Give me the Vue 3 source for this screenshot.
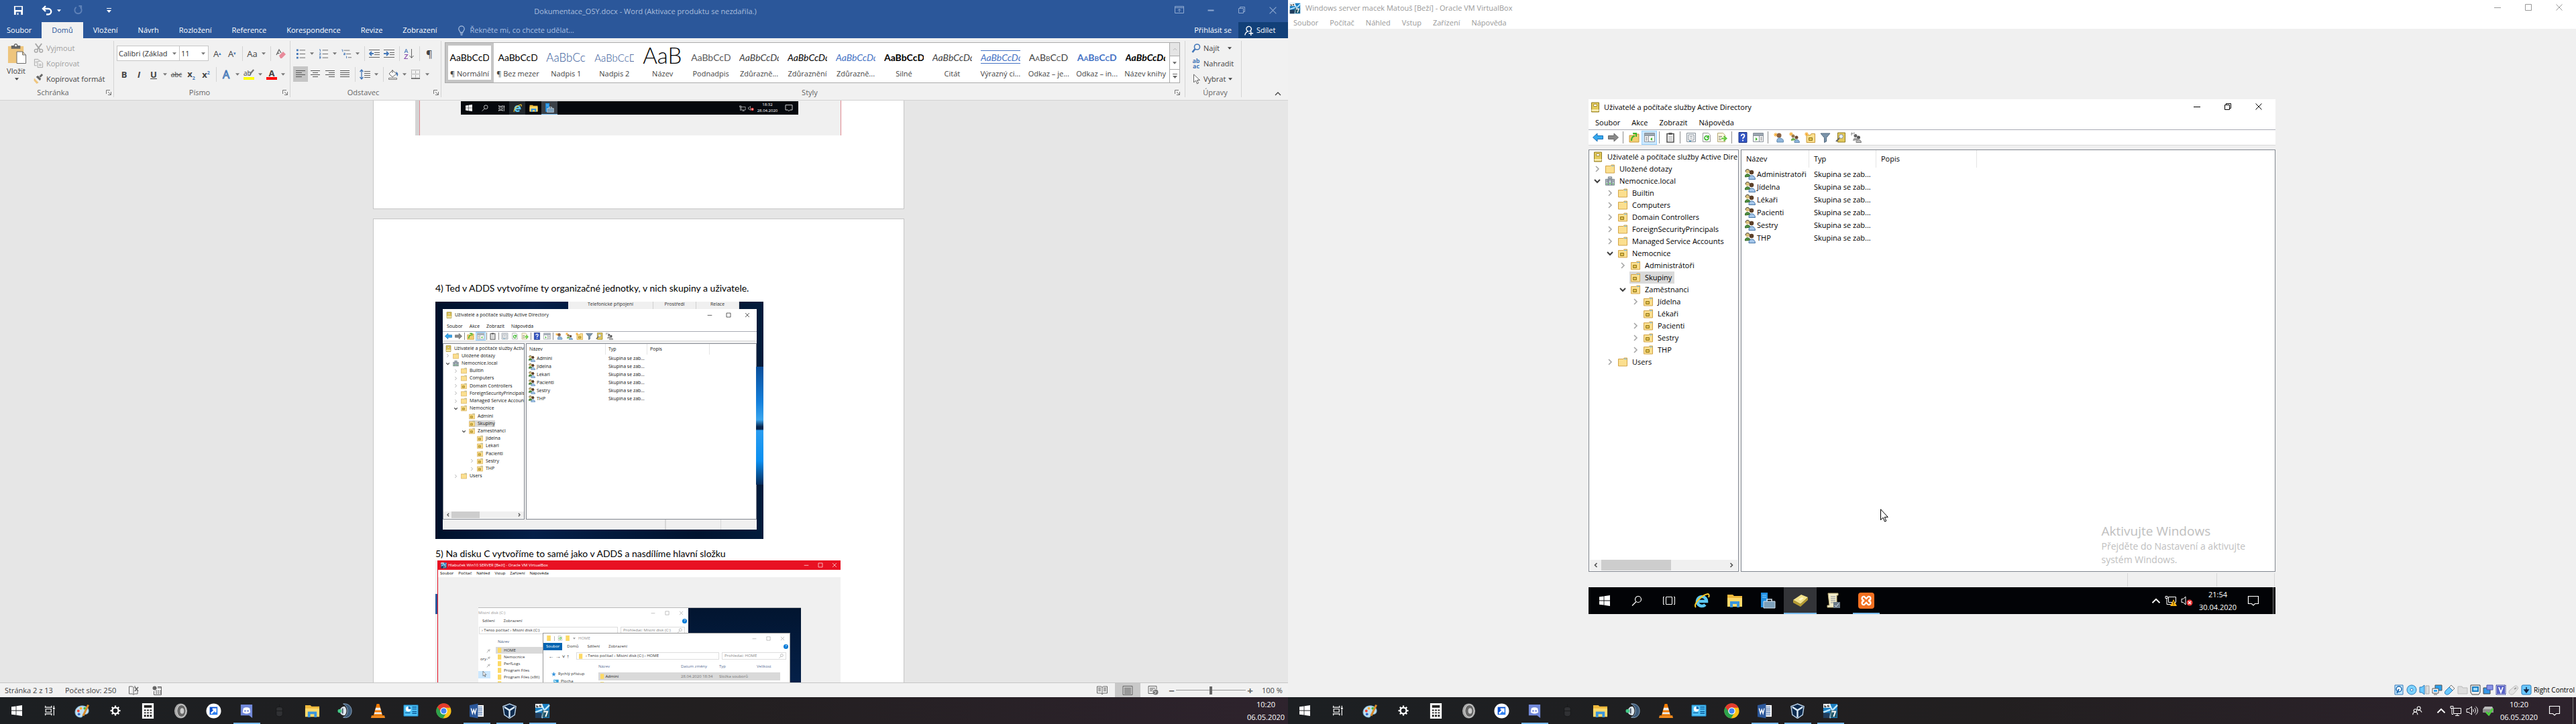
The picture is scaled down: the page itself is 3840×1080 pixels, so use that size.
<script setup>
import { h } from 'vue'

const Ic = (p) =>
  h('svg', { class: 'ic', width: p.s || 16, height: p.t || p.s || 16, 'aria-hidden': 'true' }, [
    h('use', { href: '#' + p.n, width: '100%', height: '100%' }),
  ])
Ic.props = ['n', 's', 't']

const tabs = ['Domů', 'Vložení', 'Návrh', 'Rozložení', 'Reference', 'Korespondence', 'Revize', 'Zobrazení']
const styles = [
  ['¶ Normální', ''], ['¶ Bez mezer', ''], ['Nadpis 1', 'h1'], ['Nadpis 2', 'h2'], ['Název', 'title'],
  ['Podnadpis', 'sub'], ['Zdůrazně...', 'em grey'], ['Zdůraznění', 'em'], ['Zdůrazně...', 'em blue'],
  ['Silné', 'strong'], ['Citát', 'em grey'], ['Výrazný ci...', 'em blue lined'], ['Odkaz – je...', 'caps grey'],
  ['Odkaz – in...', 'caps blue strong'], ['Název knihy', 'em strong'],
]
const vmMenu = ['Soubor', 'Počítač', 'Náhled', 'Vstup', 'Zařízení', 'Nápověda']
const adMenu = ['Soubor', 'Akce', 'Zobrazit', 'Nápověda']
const adTools = ['back', 'fwd', '|', 'upfolder', '*panel', '|', 'clip', '|', 'props', 'refresh', 'export', '|', 'help', 'panel2', '|', 'user', 'group', 'newou', 'filter', 'find', 'people']

const tree = (admins, staff, names, marks) => [
  [0, '-', 'book', 'Uživatelé a počítače služby Active Directory'],
  [0, 'r', 'folder', 'Uložené dotazy'],
  [0, 'd', 'domain', 'Nemocnice.local'],
  [1, 'r', 'folder', 'Builtin'],
  [1, 'r', 'folder', 'Computers'],
  [1, 'r', 'ou', 'Domain Controllers'],
  [1, 'r', 'folder', 'ForeignSecurityPrincipals'],
  [1, 'r', 'folder', 'Managed Service Accounts'],
  [1, 'd', 'ou', 'Nemocnice'],
  [2, marks[0], 'ou', admins],
  [2, '', 'ou', 'Skupiny', true],
  [2, 'd', 'ou', staff],
  ...names.map((n, i) => [3, marks[i + 1], 'ou', n]),
  [1, 'r', 'folder', 'Users'],
]
const bigTree = tree('Administrátoři', 'Zaměstnanci', ['Jídelna', 'Lékaři', 'Pacienti', 'Sestry', 'THP'], ['r', 'r', '', 'r', 'r', 'r'])
const miniTree = tree('Admini', 'Zamestnanci', ['Jidelna', 'Lekari', 'Pacienti', 'Sestry', 'THP'], ['', '', '', '', 'r', 'r'])
const bigGroups = ['Administratoři', 'Jídelna', 'Lékaři', 'Pacienti', 'Sestry', 'THP']
const miniGroups = ['Admini', 'Jidelna', 'Lekari', 'Pacienti', 'Sestry', 'THP']

const apps = [
  ['taskview'], ['paint'], ['gear'], ['calc'], ['speaker'], ['arrowapp'], ['discord', 1], ['mouse'], ['explorer'],
  ['teamspeak'], ['vlc'], ['cpanel'], ['chrome'], ['word', 1], ['vbox', 1], ['win7', 1],
]
const vmIcons = ['hdd', 'disc', 'audio', 'net2', 'usb', 'shared', 'display', 'record', 'cpu', 'mouse2', 'hostkey']
const disk = ['HOME', 'Nemocnice', 'PerfLogs', 'Program Files', 'Program Files (x86)', 'Users']
</script>

<template>
  <svg class="defs" aria-hidden="true">
    <symbol id="save" viewBox="0 0 16 16"><path d="M1 1h14v14H1z" fill="#fff" /><path d="M3 2.500h10v5H3zM4 10h8v5H4z" fill="#2b579a" /><path d="M6 12h2v3H6z" fill="#fff" /></symbol>
    <symbol id="undo" viewBox="0 0 16 16"><path d="M3 5h7a4 4 0 0 1 0 8.500H7M6 1 2 5l4 4" fill="none" stroke="currentColor" stroke-width="2.400" /></symbol>
    <symbol id="redo" viewBox="0 0 16 16"><path d="M5 3a5.500 5.500 0 1 0 6 0M9 1h4v4" fill="none" stroke="currentColor" stroke-width="2" /></symbol>
    <symbol id="tri" viewBox="0 0 7 4"><path d="M0 0h7L3.500 4z" fill="currentColor" /></symbol>
    <symbol id="qat" viewBox="0 0 7 8"><path d="M0 0h7v1H0zM0 3h7L3.500 7z" fill="currentColor" /></symbol>
    <symbol id="min" viewBox="0 0 12 12"><path d="M1 6.500h10" stroke="currentColor" /></symbol>
    <symbol id="minb" viewBox="0 0 12 12"><path d="M1.500 6.500h9" stroke="currentColor" stroke-width="2" /></symbol>
    <symbol id="max" viewBox="0 0 12 12"><path d="M1.500 1.500h9v9h-9z" fill="none" stroke="currentColor" /></symbol>
    <symbol id="restore" viewBox="0 0 12 12"><path d="M1.500 3.500h7v7h-7zM3.500 3V1.500h7v7H9" fill="none" stroke="currentColor" /></symbol>
    <symbol id="close" viewBox="0 0 12 12"><path d="m1.500 1.500 9 9m0-9-9 9" stroke="currentColor" fill="none" /></symbol>
    <symbol id="ropts" viewBox="0 0 14 12"><path d="M.5.5h13v10H.5zM.5 2.500h13M7 9V4.500M5 6.500 7 4.500l2 2" fill="none" stroke="currentColor" /></symbol>
    <symbol id="bulb" viewBox="0 0 12 16"><path d="M4 11c0-2-2.500-3-2.500-5.500a4.500 4.500 0 0 1 9 0C10.500 8 8 9 8 11zM4 13h4M4.500 15h3" fill="none" stroke="currentColor" stroke-width="1.300" /></symbol>
    <symbol id="share" viewBox="0 0 16 16"><path d="M8 9.500A4 4 0 1 1 9 9.400M2 15.500c.3-3 2-5 4.500-6M8 12.500h7M11.500 9v7" fill="none" stroke="#fff" stroke-width="1.500" /></symbol>
    <symbol id="paste" viewBox="0 0 30 32"><path d="M1 4h24v26H1z" fill="#eec57d" /><path d="M6 3h4c0-4 6-4 6 0h4v5H6z" fill="#666" /><circle cx="13" cy="3" r="1.500" fill="#fff" /><path d="M14.500 12.500h9l5 5v13h-14zM23.500 12.500v5h5" fill="#fff" stroke="#666" /></symbol>
    <symbol id="cut" viewBox="0 0 16 16"><path d="m3 1 7 9.500M13 1 6 10.500" stroke="#a6a6a6" stroke-width="2" /><circle cx="4" cy="12.500" r="2.500" fill="none" stroke="#a6a6a6" stroke-width="1.500" /><circle cx="12" cy="12.500" r="2.500" fill="none" stroke="#a6a6a6" stroke-width="1.500" /></symbol>
    <symbol id="copy" viewBox="0 0 16 16"><path d="M9.500 4V3.500l-2-2h-6v10H5M6.500 4.500h5l3 3v7h-8zM3 5h2M3 7h2M8.500 9.500h4M8.500 11.500h4" fill="none" stroke="#a6a6a6" /></symbol>
    <symbol id="brush" viewBox="0 0 16 16"><path d="M1 7 8 14l-3 2-4.500-5z" fill="#eec57d" /><path d="m4 5 3-2 5 5-2 3z" fill="#666" /><path d="m10 5 4-4" stroke="#666" stroke-width="3" /></symbol>
    <symbol id="launch" viewBox="0 0 8 8"><path d="M.5 6V.5H6M3 3l4 4M7.500 3v4.500H3" fill="none" stroke="#777" /></symbol>
    <symbol id="eraser" viewBox="0 0 16 16"><path d="m2 10 4-8 3 5M3.500 7.500h3" fill="none" stroke="#666" stroke-width="1.300" /><path d="m6 11 6-6 4 4-6 6H8z" fill="#e88a9a" /></symbol>
    <symbol id="pen" viewBox="0 0 16 14"><path d="m15 1-7 8" stroke="#777" stroke-width="3" /><path d="m8 7 2 3-4 2z" fill="#777" /></symbol>
    <symbol id="bul" viewBox="0 0 16 16"><path d="M6 2.500h9M6 8.500h9M6 14.500h9" stroke="#666" /><path d="M1 1h3v3H1zM1 7h3v3H1zM1 13h3v3H1z" fill="#4377b8" /></symbol>
    <symbol id="num" viewBox="0 0 16 16"><path d="M6 2.500h9M6 8.500h9M6 14.500h9" stroke="#666" /><path d="M1 1.500h1.500V5M1 7h2v1.500L1 10h2.500M1 12.500h2v3H1m0-1.500h2" stroke="#4377b8" fill="none" /></symbol>
    <symbol id="multi" viewBox="0 0 17 16"><path d="M4 2.500h10M8 8.500h8M11 14.500h6" stroke="#666" /><path d="M.5 1.500H2V5M4 7h2v3H4V8.500h2M8.500 12v4" stroke="#4377b8" fill="none" /></symbol>
    <symbol id="outd" viewBox="0 0 16 14"><path d="M0 1.500h16M8 5.500h8M8 8.500h8M0 12.500h16" stroke="#666" /><path d="M7 7H1m3-3L1 7l3 3" stroke="#4377b8" stroke-width="1.800" fill="none" /></symbol>
    <symbol id="ind" viewBox="0 0 16 14"><path d="M0 1.500h16M9 5.500h7M9 8.500h7M0 12.500h16" stroke="#666" /><path d="M0 7h6M4 4l3 3-3 3" stroke="#4377b8" stroke-width="1.800" fill="none" /></symbol>
    <symbol id="sort" viewBox="0 0 16 16"><path d="m1 7 2.500-6L6 7M2 5h3" stroke="#4377b8" fill="none" /><path d="M1 9.500h4.500l-4.500 6H6" stroke="#8a4fae" fill="none" stroke-width="1.200" /><path d="M11.500 1v13M8.500 11l3 3.500 3-3.500" stroke="#666" fill="none" /></symbol>
    <symbol id="al" viewBox="0 0 16 14"><path d="M1 1.500h14M1 4.500h9M1 7.500h14M1 10.500h9" stroke="#555" /></symbol>
    <symbol id="ac" viewBox="0 0 16 14"><path d="M1 1.500h14M4 4.500h8M1 7.500h14M4 10.500h8" stroke="#555" /></symbol>
    <symbol id="ar" viewBox="0 0 16 14"><path d="M1 1.500h14M6 4.500h9M1 7.500h14M6 10.500h9" stroke="#555" /></symbol>
    <symbol id="aj" viewBox="0 0 16 14"><path d="M1 1.500h14M1 4.500h14M1 7.500h14M1 10.500h14" stroke="#555" /></symbol>
    <symbol id="lines" viewBox="0 0 16 16"><path d="M7 3.500h9M7 6.500h9M7 9.500h9M7 12.500h9" stroke="#666" /><path d="M3 1v14M.5 4 3 1l2.500 3M.5 12 3 15l2.500-3" stroke="#4377b8" stroke-width="1.300" fill="none" /></symbol>
    <symbol id="shade" viewBox="0 0 16 16"><path d="m7 2 6 5-6 5-5-5zM7 6V1" fill="#fff" stroke="#666" /><path d="M12 4c4 1 4 5 2 7z" fill="#4377b8" /><path d="M1.500 13.500h12v2h-12z" fill="#fff" stroke="#777" /></symbol>
    <symbol id="bord" viewBox="0 0 14 14"><path d="M.5 0v13M6.500 0v13M12.500 0v13M0 .5h13M0 6.500h13" stroke="#777" stroke-dasharray="1 1" /><path d="M0 13h13" stroke="#555" stroke-width="1.500" /></symbol>
    <symbol id="lens" viewBox="0 0 14 14"><circle cx="8.500" cy="5" r="4" fill="none" stroke="#4377b8" stroke-width="1.600" /><path d="m5.500 8-4 5" stroke="#4377b8" stroke-width="2.600" /></symbol>
    <symbol id="ptr" viewBox="0 0 12 16"><path d="M2.500 1v12l3-3 2 5 2-1-2-4.500h4z" fill="#fff" stroke="#666" /></symbol>
    <symbol id="cursor" viewBox="0 0 12 20"><path d="M.5.700v15.800l3.600-3.400 2.500 6 2.200-1-2.500-5.700h5z" fill="#fff" stroke="#000" /></symbol>
    <symbol id="up" viewBox="0 0 10 8"><path d="m1 6 4-4 4 4" fill="none" stroke="currentColor" stroke-width="1.300" /></symbol>
    <symbol id="down" viewBox="0 0 12 12"><path d="m2 4 4 4 4-4" fill="none" stroke="#404040" stroke-width="2" /></symbol>
    <symbol id="right" viewBox="0 0 12 12"><path d="m4 2 4 4-4 4" fill="none" stroke="#a6a6a6" stroke-width="1.600" /></symbol>
    <symbol id="sl" viewBox="0 0 8 8"><path d="M5.500 1 2.500 4l3 3" fill="none" stroke="#505050" stroke-width="1.600" /></symbol>
    <symbol id="sr" viewBox="0 0 8 8"><path d="m2.500 1 3 3-3 3" fill="none" stroke="#505050" stroke-width="1.600" /></symbol>

    <symbol id="win" viewBox="0 0 16 16"><path d="M0 2.300 6.600 1.400v6.200H0zM7.400 1.300 16 0v7.600H7.400zM0 8.400h6.600v6.200L0 13.700zM7.400 8.400H16V16l-8.600-1.300z" fill="#fff" /></symbol>
    <symbol id="search" viewBox="0 0 16 16"><circle cx="10" cy="6" r="4.500" fill="none" stroke="currentColor" stroke-width="1.200" /><path d="M7 9.500 1 15.500" stroke="currentColor" stroke-width="1.200" /></symbol>
    <symbol id="tview" viewBox="0 0 20 16"><path d="M5.500 2.500h9v11h-9zM3 2.500H1.500v11H3M17 2.500h1.500v11H17" fill="none" stroke="#fff" /></symbol>
    <symbol id="taskview" viewBox="0 0 20 20"><path d="M2 4.500h12M2 15.500h12M3 2v2.500M13 2v2.500M3 18v-2.500M13 18v-2.500M3.500 7.500h9v5h-9zM17 2v3M17 9v9" fill="none" stroke="#fff" stroke-width="1.300" /><path d="M15.500 5h3v3h-3z" fill="#fff" /></symbol>
    <symbol id="paint" viewBox="0 0 24 24"><path d="M12 4C5 4 1 9 1 14s4 8 9 8c3 0 2-3 4-4s7 0 8-5c1-6-5-9-10-9z" fill="#bfe0f2" stroke="#6fa6c8" /><circle cx="6" cy="12" r="2" fill="#e43" /><circle cx="10" cy="8" r="2" fill="#fa3" /><circle cx="16" cy="8" r="2" fill="#4b4" /><circle cx="7" cy="17" r="2" fill="#36c" /><path d="m12 19 8-17 3 1-8 17z" fill="#d98b2b" /></symbol>
    <symbol id="gear" viewBox="0 0 24 24"><circle cx="12" cy="12" r="6" fill="none" stroke="#fff" stroke-width="3" /><path d="M12 2v4M12 18v4M2 12h4M18 12h4M5 5l3 3M16 16l3 3M19 5l-3 3M8 16l-3 3" stroke="#fff" stroke-width="3" /></symbol>
    <symbol id="calc" viewBox="0 0 24 24"><path d="M3 0h18v24H3z" fill="#fff" /><path d="M6 3h12v4H6zM6 10h3v2H6zM10.500 10h3v2h-3zM15 10h3v2h-3zM6 14h3v2H6zM10.500 14h3v2h-3zM15 14h3v2h-3zM6 18h3v3H6zM10.500 18h3v3h-3zM15 18h3v3h-3z" fill="#222" /></symbol>
    <symbol id="speaker" viewBox="0 0 24 24"><ellipse cx="12" cy="12" rx="10" ry="11.500" fill="#aaa" /><ellipse cx="13" cy="12" rx="7" ry="9.500" fill="#666" stroke="#ddd" /><ellipse cx="14" cy="12" rx="3" ry="4.500" fill="#ccc" /></symbol>
    <symbol id="arrowapp" viewBox="0 0 24 24"><circle cx="12" cy="12" r="11.500" fill="#fff" /><path d="M6 6h12v12H6z" fill="#2d7ff0" /><path d="M6 6h12L6 18z" fill="#0a4fd0" /><path d="m8 16 6-6M10 9h5v5" stroke="#fff" stroke-width="2.500" fill="none" /></symbol>
    <symbol id="discord" viewBox="0 0 24 24"><path d="M3 2h18v21l-5-4H3z" fill="#7289da" /><path d="M7 8c3-2 7-2 10 0l1 6c-4 3-8 3-12 0z" fill="#fff" /><circle cx="9.800" cy="12" r="1.400" fill="#7289da" /><circle cx="14.200" cy="12" r="1.400" fill="#7289da" /></symbol>
    <symbol id="mouse" viewBox="0 0 24 24"><path d="M7 8c0-3 10-3 10 0v9c0 5-10 5-10 0zM12 6V2M7 12h10" fill="#303134" stroke="#17181a" /></symbol>
    <symbol id="explorer" viewBox="0 0 24 24"><path d="M1 3h8l2 2h12v16H1z" fill="#f0b93c" /><path d="M1 8h22v13H1z" fill="#ffda6b" /><path d="M5 22v-9h14v9h-4v-5H9v5z" fill="#3a96dd" /></symbol>
    <symbol id="teamspeak" viewBox="0 0 24 24"><path d="M9 1c9-1 13 5 13 11S18 24 9 22c9-3 9-17 0-21z" fill="#3d5a78" stroke="#8faac6" /><path d="M11 5c4 3 4 11 0 14-6-1-7-3-7-7s3-7 7-7z" fill="#dfe7ee" /><path d="M8 8v8" stroke="#456" stroke-width="2" /><circle cx="3.500" cy="12" r="3" fill="#4c8" /></symbol>
    <symbol id="vlc" viewBox="0 0 24 24"><path d="M10 1h4l5 18H5z" fill="#f57c00" /><path d="M8.500 7h7l1 4h-9zM6.700 14h10.600l.8 3H6z" fill="#eee" /><path d="M2 19h20l1 4H1z" fill="#f58a1c" /></symbol>
    <symbol id="cpanel" viewBox="0 0 24 24"><path d="M1 3h22v17H1z" fill="#4fc3f7" stroke="#1d85c4" /><circle cx="8" cy="9" r="4" fill="#fff" /><path d="M8 9V5a4 4 0 0 1 4 4z" fill="#1469b0" /><path d="M14 6h7M14 9h7M3 15h8M14 13h7M14 16h7" stroke="#0e5d9d" stroke-width="1.500" /></symbol>
    <symbol id="chrome" viewBox="0 0 24 24"><circle cx="12" cy="12" r="11.500" fill="#fbc116" /><path d="M2 6a11.500 11.500 0 0 1 20 0v1H12L7 15z" fill="#e33b2e" /><path d="M2 6a11.500 11.500 0 0 0 9 17.500L16 15l-8-1z" fill="#2ba24c" /><circle cx="12" cy="12" r="5.500" fill="#fff" /><circle cx="12" cy="12" r="4.200" fill="#4285f4" /></symbol>
    <symbol id="word" viewBox="0 0 24 24"><path d="M12 3h11v18H12z" fill="#fff" /><path d="M14 6h7M14 9h7M14 12h7M14 15h7M14 18h7" stroke="#2b579a" stroke-width="1.200" /><path d="M1 3 14 .5v23L1 21z" fill="#2b579a" /><path d="m3.500 8 2 8 2-6 2 6 2-8" fill="none" stroke="#fff" stroke-width="1.500" /></symbol>
    <symbol id="vbox" viewBox="0 0 24 24"><path d="m12 1 10 4-2 13-8 5.500L4 18 2 5z" fill="#0d2a4d" stroke="#b7cfe6" stroke-width="1.500" /><path d="m4 6 8 5 8-5M12 11v11" stroke="#dcebf8" stroke-width="2.500" fill="none" /></symbol>
    <symbol id="win7" viewBox="0 0 24 24"><path d="M1 1h22v22H1z" fill="#1b7fc2" /><path d="m10 1 5 10-4 12M15 11l8-8M1 14l11-4" stroke="#bfe8ff" stroke-width="2.500" fill="none" /><path d="M1 1h11v6H1z" fill="#fff" /><path d="M3 3v3h2V4.500H3M8.500 2.500 7 5h3M9.500 3v3" stroke="#222" fill="none" /><path d="M1 15h10v8H1z" fill="#223" opacity=".7" /><path d="M12 11h10v11H12z" fill="#244" opacity=".7" /><path d="M14 13h6l-3 8" stroke="#fff" stroke-width="2" fill="none" /></symbol>
    <symbol id="ie" viewBox="0 0 24 24"><path d="M5 13h14a7 7 0 1 0-2 5" fill="none" stroke="#5cc8f5" stroke-width="4.500" /><path d="M3 22C-1 18 10 4 21 2c2 0 2 3 1 5" fill="none" stroke="#fbc927" stroke-width="2" /></symbol>
    <symbol id="server" viewBox="0 0 24 24"><path d="M2 0h10v22H2z" fill="#1e8de0" /><path d="M4 4h6M4 7h6" stroke="#8cd0ff" /><path d="M6 13h17v10H6z" fill="#7da0ba" stroke="#d5e4ef" /><path d="M11 13v-3h7v3" fill="none" stroke="#d5e4ef" stroke-width="1.500" /></symbol>
    <symbol id="adbook" viewBox="0 0 24 24"><path d="m1 12 12-8 10 4-11 10z" fill="#f3e28a" /><path d="m1 12 11 6v4L1 16zM12 18l11-10v4L12 22z" fill="#b59a32" /><path d="m9 11 5-3 3 1-5 4z" fill="#fff7c4" /></symbol>
    <symbol id="gpo" viewBox="0 0 24 24"><path d="M4 1h15v3h-2v18H3v-3h3z" fill="#f3ecc8" stroke="#b8a973" /><path d="M8 6h7M8 9h7M8 12h7M8 15h4" stroke="#8a8fa0" /><path d="M12 14h10v9H12z" fill="#6d7c8a" /><path d="m14 19 2 2 4-5" stroke="#dfe7ee" fill="none" /></symbol>
    <symbol id="xampp" viewBox="0 0 24 24"><rect width="24" height="24" rx="4" fill="#f37021" /><path d="M9 12c-5-1-4-7 0-6l3 3 3-3c4-1 5 5 0 6 5 1 4 7 0 6l-3-3-3 3c-4 1-5-5 0-6z" fill="none" stroke="#fff" stroke-width="2.400" /></symbol>
    <symbol id="network" viewBox="0 0 18 16"><path d="M5.500 4.500h11v8h-11zM11 12.500v3M8 15.500h6M1 1.500h4v3H1zM3 4.500v9h2" fill="none" stroke="#fff" /></symbol>
    <symbol id="netwarn" viewBox="0 0 18 16"><path d="M5.500 2.500h11v8h-11zM1 1.500h3v3H1zM3 4.500v9h6" fill="none" stroke="#fff" /><path d="M13 6l5 10H8z" fill="#fdb813" /><path d="M13 9v3.500M13 13.500v1" stroke="#000" /></symbol>
    <symbol id="vol" viewBox="0 0 18 16"><path d="M1 5.500h3L8.500 2v12L4 10.500H1zM10.500 6c1 1 1 3 0 4M12.500 4c2.500 2 2.500 6 0 8M14.500 2c4 3 4 9 0 12" fill="none" stroke="#fff" /></symbol>
    <symbol id="volx" viewBox="0 0 18 16"><path d="M1 5.500h2.500L7 2v12l-3.500-3.500H1z" fill="none" stroke="#fff" /><circle cx="13" cy="11" r="4.500" fill="#e33" /><path d="m11 9 4 4m0-4-4 4" stroke="#fff" stroke-width="1.400" /></symbol>
    <symbol id="ppl" viewBox="0 0 18 18"><circle cx="12" cy="5" r="2.800" fill="none" stroke="#fff" stroke-width="1.200" /><circle cx="6" cy="9" r="2.500" fill="none" stroke="#fff" stroke-width="1.200" /><path d="M2 16c0-6 8-6 8 0M10 9c3-2 6 0 7 3" fill="none" stroke="#fff" stroke-width="1.200" /></symbol>
    <symbol id="eject" viewBox="0 0 18 16"><path d="m4 2 11 0 2 4v5H1V6z" fill="#bbb" /><path d="M1 6h16v5H1z" fill="#8c8c8c" /><path d="m6 10 4 4 6-9" stroke="#4dce3f" stroke-width="3" fill="none" /></symbol>
    <symbol id="note" viewBox="0 0 18 18"><path d="M1.500 2.500h15v11h-5L9 16l-2.500-2.500h-5z" fill="none" stroke="#fff" stroke-width="1.200" /></symbol>

    <symbol id="back" viewBox="0 0 16 16"><path d="M.5 8 7 2v3.500h8.500v5H7V14z" fill="#35a9ee" stroke="#1a6fb8" /></symbol>
    <symbol id="fwd" viewBox="0 0 16 16"><path d="M15.500 8 9 2v3.500H.5v5H9V14z" fill="#8a8a8a" stroke="#666" /></symbol>
    <symbol id="folder" viewBox="0 0 14 14"><path d="M.5 2.500H8L9 1h4.500v12H.5z" fill="#fbdf8f" stroke="#d3a54a" /><path d="M9 2.500h4" stroke="#6db3e8" /></symbol>
    <symbol id="ou" viewBox="0 0 14 14"><path d="M.5 2.500H8L9 1h4.500v12H.5z" fill="#fbdf8f" stroke="#d3a54a" /><path d="M9 2.500h4" stroke="#6db3e8" /><path d="M3.500 6.500h5v4h-5z" fill="#e0bd4c" stroke="#8f741a" /></symbol>
    <symbol id="book" viewBox="0 0 14 16"><path d="M1.500 1h11v14h-11z" fill="#e3ca5c" stroke="#8f7a22" /><path d="M1.500 12.500h11" stroke="#fff8cf" stroke-width="2" /><path d="M4.500 3.500h5v3h-5z" fill="#fff" stroke="#a99036" /></symbol>
    <symbol id="domain" viewBox="0 0 16 16"><path d="M5 1h6v14H5zM.5 5H5v10H.5zM11 5h4.500v10H11z" fill="#b9c3cc" stroke="#67737e" /><path d="M6.500 4h3M6.500 6h3M2 8h2M12.500 8h2" stroke="#556" /><path d="M7 11h2v2H7zM2 12h1v2H2zM13 12h1v2h-1z" fill="#3fdc2b" /></symbol>
    <symbol id="upfolder" viewBox="0 0 16 16"><path d="M1 5h6l1-2h7v12H1z" fill="#f2cf72" stroke="#c99a3c" /><path d="M4 13c0-5 2-7 5-7M6 2h5v5" stroke="#3cb52a" stroke-width="2" fill="none" /></symbol>
    <symbol id="panel" viewBox="0 0 16 16"><path d="M.5 1.500h15v13H.5zM.5 5.500h15M6.500 6v8" fill="#fff" stroke="#8a929b" /><path d="M1 2h14v3H1z" fill="#9aa5b0" /><path d="m12 8-3 2.500 3 2.500z" fill="#3cb52a" /><path d="M2 8h3M2 10h3M2 12h3" stroke="#888" /></symbol>
    <symbol id="panel2" viewBox="0 0 16 16"><path d="M.5 1.500h15v13H.5zM.5 5.500h15M9.500 6v8" fill="#fff" stroke="#8a929b" /><path d="M1 2h14v3H1z" fill="#9aa5b0" /><path d="m4 8 3 2.500L4 13z" fill="#3cb52a" /><path d="M11 8h3M11 10h3M11 12h3" stroke="#888" /></symbol>
    <symbol id="clip" viewBox="0 0 16 16"><path d="M3 2.500h10v12.500H3z" fill="#fff" stroke="#555" stroke-width="1.600" /><path d="M5.500 1h5v3h-5z" fill="#555" /><path d="M5 6.500h6M5 8.500h6M5 10.500h6M5 12.500h6" stroke="#aaa" /></symbol>
    <symbol id="props" viewBox="0 0 16 16"><path d="M1.500 1.500h13v13h-13z" fill="#f2f5f8" stroke="#8a929b" /><path d="M4 4h8v8H4zM6 6.500h4M6 9h4" fill="#fff" stroke="#8a929b" /><path d="M5 13.500h3" stroke="#39c" /></symbol>
    <symbol id="refresh" viewBox="0 0 16 16"><path d="M2.500 1.500h8l3 3v10h-11z" fill="#fff" stroke="#9a9a9a" /><path d="M11 9a3 3 0 1 1-1-2.500M11 5v3H8" fill="none" stroke="#33b324" stroke-width="1.600" /></symbol>
    <symbol id="export" viewBox="0 0 16 16"><path d="M1.500 1.500h8l3 3v10h-11z" fill="#fff9df" stroke="#b4a878" /><path d="M3 6.500h5M3 9h3M3 11.500h4" stroke="#777" /><path d="M7 9.500h5M10.500 6l4 3.500-4 3.500" fill="none" stroke="#5cc93a" stroke-width="2" /></symbol>
    <symbol id="help" viewBox="0 0 16 16"><path d="M2 .5h12v15H2z" fill="#3355c4" stroke="#1c3380" /><path d="M5.800 6c0-4 4.600-3 4.600-.5C10.400 8 8 8 8 10M8 11.500v2" stroke="#fff" stroke-width="1.800" fill="none" /></symbol>
    <symbol id="user" viewBox="0 0 16 16"><path d="M3 1v6M0 4h6M1 2l4 4M5 2 1 6" stroke="#f7a928" /><circle cx="8" cy="5" r="3.500" fill="#8b6343" /><path d="M5 15c-1-6 3-7 5-6s5 1 4.500 6z" fill="#8fb6dc" stroke="#5d86ad" /></symbol>
    <symbol id="group" viewBox="0 0 16 16"><path d="M3 0v6M0 3h6M1 1l4 4M5 1 1 5" stroke="#f7a928" /><circle cx="6" cy="6" r="2.500" fill="#9a7a4a" /><path d="M3 13c-1-4 5-6 7-1z" fill="#6fae4e" /><circle cx="11" cy="8" r="2.500" fill="#6b4a34" /><path d="M8 15.500c-1-5 7-6 7.500 0z" fill="#8fb6dc" stroke="#5d86ad" /></symbol>
    <symbol id="newou" viewBox="0 0 16 16"><path d="M3 4.500h6l1-2h5.500v13H3z" fill="#fbdf8f" stroke="#c99a3c" /><path d="M6.500 8.500h5v4h-5z" fill="#e0bd4c" stroke="#8f741a" /><path d="M3 0v6M0 3h6M1 1l4 4M5 1 1 5" stroke="#f7a928" /></symbol>
    <symbol id="filter" viewBox="0 0 16 16"><path d="M1 2h14L9.500 8.500V14l-3 1.500v-7z" fill="#7b94aa" stroke="#536b80" /></symbol>
    <symbol id="find" viewBox="0 0 16 16"><path d="M3.500 1h11v14h-11z" fill="#e3ca5c" stroke="#8f7a22" /><circle cx="8.500" cy="6.500" r="3" fill="#e8f4ff" stroke="#8a8a8a" /><path d="m6 9-5 5" stroke="#666" stroke-width="2" /></symbol>
    <symbol id="people" viewBox="0 0 16 16"><path d="M1 5V1l3 2M4 1l2 1" stroke="#777" fill="none" /><circle cx="7" cy="5.500" r="2.500" fill="#666" /><path d="M3 13c0-5 6-6 8-1z" fill="#999" /><circle cx="11.500" cy="8" r="2.500" fill="#555" /><path d="M8 15.500c-1-5 7-6 7.500 0z" fill="#bbb" stroke="#777" /></symbol>
    <symbol id="grp" viewBox="0 0 16 16"><circle cx="4" cy="3.500" r="3" fill="#d9c07a" /><path d="M1 4c0-5 6-4 6-1" stroke="#333" fill="none" /><path d="M.5 12c-1-5 6-6 8-1z" fill="#4f9141" stroke="#2f6425" /><circle cx="10" cy="5" r="3.300" fill="#5d4029" /><path d="M6 15.500c-1-7 9-8 9.500 0z" fill="#a5c6ea" stroke="#4676a8" /></symbol>

    <symbol id="hdd" viewBox="0 0 16 16"><path d="M2 1h12v14H2z" fill="#bfe6ff" stroke="#3579b8" /><circle cx="8" cy="7" r="4" fill="#fff" stroke="#1b66ad" stroke-width="1.500" /><path d="m8 7-3 6" stroke="#1b66ad" stroke-width="2" /></symbol>
    <symbol id="disc" viewBox="0 0 16 16"><circle cx="8" cy="8" r="7" fill="#7dd3ff" stroke="#2b79b8" /><circle cx="8" cy="8" r="2" fill="#fff" stroke="#2b79b8" /></symbol>
    <symbol id="audio" viewBox="0 0 16 16"><path d="M1 4h3l4-3v14l-4-3H1z" fill="#6bc9ff" stroke="#2b79b8" /><path d="M10 2h5v12h-5z" fill="#ddd" stroke="#aaa" /></symbol>
    <symbol id="net2" viewBox="0 0 16 16"><path d="M5 1h10v8H5z" fill="#2ba0ee" stroke="#555" /><path d="M1 6h9v7H1zM3 15h5" fill="#fff" stroke="#555" /><path d="M3 8h5v3H3z" fill="#2ba0ee" /></symbol>
    <symbol id="usb" viewBox="0 0 16 16"><path d="M10 1l5 5-3 3-5-5z" fill="#eee" stroke="#777" /><path d="m7 4 5 5-5 5c-3 2-5 1-6 0s-1-3 1-5z" fill="#6bc9ff" stroke="#2b79b8" /></symbol>
    <symbol id="shared" viewBox="0 0 16 16"><path d="M1 3h6l1 2h7v9H1z" fill="#ddd" stroke="#bbb" /></symbol>
    <symbol id="display" viewBox="0 0 16 16"><path d="M1 1h14v11l-2 3H3l-2-3z" fill="#eee" stroke="#444" /><path d="M4 4h8v6H4z" fill="#9ad8ff" stroke="#1b7fc2" stroke-width="2" /></symbol>
    <symbol id="record" viewBox="0 0 16 16"><path d="M1 5h10v9H1z" fill="#3597e8" stroke="#444" /><path d="M6 1h9v7H6z" fill="#8a94ea" stroke="#4650a8" /></symbol>
    <symbol id="cpu" viewBox="0 0 16 16"><path d="M1 1h14v14H1z" fill="none" stroke="#4650a8" stroke-dasharray="1 1" stroke-width="2" /><path d="M2 2h12v12H2z" fill="#5a64c8" /><path d="m5 4 3 8 3-8" stroke="#fff" stroke-width="1.800" fill="none" /></symbol>
    <symbol id="mouse2" viewBox="0 0 16 16"><path d="M9 3c3-3 7 1 5 4l-6 7c-4 3-9-1-6-5z" fill="#e4e4e4" stroke="#bbb" /><path d="M9 7l3-2" stroke="#999" stroke-width="2" /></symbol>
    <symbol id="hostkey" viewBox="0 0 16 16"><rect x="1" y="1" width="14" height="14" rx="2" fill="#6bc9ff" stroke="#2b79b8" /><path d="M8 4v4M5 8h6l-3 4z" stroke="#124" stroke-width="1.500" fill="#124" /></symbol>

    <symbol id="read" viewBox="0 0 16 14"><path d="M8 2.500 6.500 1H.5v10h6L8 13l1.500-2h6V1h-6zM8 2v10M2 3.500h4M2 5.500h4M2 7.500h4M10 3.500h4M10 5.500h4M10 7.500h4" fill="none" stroke="#666" /></symbol>
    <symbol id="print" viewBox="0 0 16 14"><path d="M1 .5h14v13H1zM3 3.500h10M3 5.500h10M3 7.500h10M3 9.500h10M3 11.500h10" fill="none" stroke="#666" /></symbol>
    <symbol id="web" viewBox="0 0 16 14"><path d="M8 11.500H1V.5h12V5M3 3.500h8M3 5.500h5M3 7.500h4" fill="none" stroke="#666" /><circle cx="11.500" cy="9.500" r="4" fill="#777" /><path d="M9 8c2-1 2 2 4 1M10 12l2-2" stroke="#eee" fill="none" /></symbol>
    <symbol id="proof" viewBox="0 0 16 14"><path d="M7 2.500 5.500 1H.5v11h5L7 13.500l1.500-1.500H13V8M7 2v11M8 1h2" fill="none" stroke="#666" /><path d="m9 2 5 6m0-6L9 8" stroke="#666" stroke-width="1.600" /></symbol>
    <symbol id="macro" viewBox="0 0 14 14"><circle cx="3.500" cy="3.500" r="3" fill="#666" /><path d="M8 1.500h5.500v12H2.500V8M8 3h5M5 7.500h2M8 7.500h2M11 7.500h2M5 9.500h2M8 9.500h2M11 9.500h2M5 11.500h2M8 11.500h2M11 11.500h2" fill="none" stroke="#666" /></symbol>
    <symbol id="pin" viewBox="0 0 8 8"><path d="M1 7l2.500-2.500M3 2l3 3M4 3l2-2 1 1-2 2" stroke="#888" fill="none" /></symbol>
    <symbol id="star" viewBox="0 0 8 8"><path d="m4 0 1 3h3L5.500 5l1 3L4 6 1.500 8l1-3L0 3h3z" fill="#3191dc" /></symbol>
    <symbol id="yf" viewBox="0 0 8 10"><path d="M0 0h7v10H0z" fill="#fcd965" /></symbol>
  </svg>

  <div class="desktop">
    <section class="monitor">
      <main class="wordapp">
        <header class="wtitle">
          <div class="qat">
            <button aria-label="Uložit"><Ic n="save" :s="15" /></button>
            <button class="un" aria-label="Zpět"><Ic n="undo" :s="16" /><Ic n="tri" :s="6" :t="4" /></button>
            <button class="dim" aria-label="Znovu"><Ic n="redo" :s="15" /></button>
            <button class="last" aria-label="Přizpůsobit"><Ic n="qat" :s="7" :t="8" /></button>
          </div>
          <h1>Dokumentace_OSY.docx - Word (Aktivace produktu se nezdařila.)</h1>
          <div class="wctl">
            <button aria-label="Možnosti pásu karet"><Ic n="ropts" :s="14" :t="12" /></button>
            <button aria-label="Minimalizovat"><Ic n="minb" :s="12" /></button>
            <button aria-label="Obnovit"><Ic n="restore" :s="12" /></button>
            <button aria-label="Zavřít"><Ic n="close" :s="13" /></button>
          </div>
        </header>
        <nav class="wtabs">
          <button class="file">Soubor</button>
          <button v-for="(t, i) in tabs" :key="t" :class="{ on: i === 0 }">{{ t }}</button>
          <label class="tell"><Ic n="bulb" :s="12" :t="15" /><input placeholder="Řekněte mi, co chcete udělat..." /></label>
          <button class="login">Přihlásit se</button>
          <button class="sharebtn"><Ic n="share" :s="15" />Sdílet</button>
        </nav>

        <div class="ribbon">
          <section class="group clipb">
            <div class="gbody cb">
              <button class="big"><Ic n="paste" :s="29" :t="31" /><span>Vložit</span><Ic n="tri" :s="6" :t="4" /></button>
              <div class="stack">
                <button class="off"><Ic n="cut" :s="15" />Vyjmout</button>
                <button class="off"><Ic n="copy" :s="15" />Kopírovat</button>
                <button><Ic n="brush" :s="15" />Kopírovat formát</button>
              </div>
            </div>
            <footer><span>Schránka</span><Ic n="launch" :s="8" /></footer>
          </section>

          <section class="group fontg">
            <div class="gbody">
              <div class="row">
                <label class="combo name"><select aria-label="Písmo"><option>Calibri (Základ</option></select><Ic n="tri" :s="6" :t="4" /></label>
                <label class="combo size"><select aria-label="Velikost"><option>11</option></select><Ic n="tri" :s="6" :t="4" /></label>
                <button class="t a1">A<sup>▴</sup></button><button class="t a2">A<sup>▾</sup></button><i class="sep" />
                <button class="t aa">Aa</button><button class="ar"><Ic n="tri" :s="6" :t="4" /></button><i class="sep" />
                <button class="t"><Ic n="eraser" :s="16" /></button>
              </div>
              <div class="row">
                <button class="t"><b>B</b></button><button class="t"><b><em>I</em></b></button><button class="t"><b><u>U</u></b></button><button class="ar"><Ic n="tri" :s="6" :t="4" /></button>
                <button class="t sm"><s>abc</s></button><button class="t"><b>x<sub>2</sub></b></button><button class="t"><b>x<sup>2</sup></b></button><i class="sep" />
                <button class="t fx">A</button><button class="ar"><Ic n="tri" :s="6" :t="4" /></button>
                <button class="t bar y">ab<Ic class="pen" n="pen" :s="12" :t="11" /></button><button class="ar"><Ic n="tri" :s="6" :t="4" /></button>
                <button class="t bar r"><b>A</b></button><button class="ar"><Ic n="tri" :s="6" :t="4" /></button>
              </div>
            </div>
            <footer><span>Písmo</span><Ic n="launch" :s="8" /></footer>
          </section>

          <section class="group parg">
            <div class="gbody">
              <div class="row">
                <template v-for="n in ['bul', 'num', 'multi']" :key="n"><button class="t"><Ic :n="n" :s="15" :t="16" /></button><button class="ar"><Ic n="tri" :s="6" :t="4" /></button></template>
                <i class="sep" /><button class="t"><Ic n="outd" :s="16" :t="14" /></button><button class="t"><Ic n="ind" :s="16" :t="14" /></button>
                <i class="sep" /><button class="t"><Ic n="sort" :s="16" /></button><i class="sep" /><button class="t pil">¶</button>
              </div>
              <div class="row">
                <button class="t on"><Ic n="al" :s="16" :t="14" /></button><button class="t"><Ic n="ac" :s="16" :t="14" /></button><button class="t"><Ic n="ar" :s="16" :t="14" /></button><button class="t"><Ic n="aj" :s="16" :t="14" /></button>
                <i class="sep" /><button class="t"><Ic n="lines" :s="16" /></button><button class="ar"><Ic n="tri" :s="6" :t="4" /></button>
                <i class="sep" /><button class="t"><Ic n="shade" :s="16" /></button><button class="ar"><Ic n="tri" :s="6" :t="4" /></button>
                <button class="t"><Ic n="bord" :s="14" /></button><button class="ar"><Ic n="tri" :s="6" :t="4" /></button>
              </div>
            </div>
            <footer><span>Odstavec</span><Ic n="launch" :s="8" /></footer>
          </section>

          <section class="group styg">
            <div class="gallery">
              <button v-for="(s, i) in styles" :key="i" class="cell" :class="{ sel: i === 0 }"><span class="sample" :class="s[1]">{{ s[1] === 'title' ? 'AaB' : 'AaBbCcDd' }}</span><span class="nm">{{ s[0] }}</span></button>
              <div class="gscroll"><button class="offb"><Ic n="up" :s="7" :t="5" /></button><button><Ic n="tri" :s="6" :t="4" /></button><button><Ic n="qat" :s="7" :t="8" /></button></div>
            </div>
            <footer><span>Styly</span><Ic n="launch" :s="8" /></footer>
          </section>

          <section class="group edg">
            <div class="stack">
              <button><Ic n="lens" :s="14" />Najít<Ic class="mr" n="tri" :s="6" :t="4" /></button>
              <button><span class="rep"><b>ab</b><b>ac</b></span>Nahradit</button>
              <button><Ic n="ptr" :s="14" :t="16" />Vybrat<Ic n="tri" :s="6" :t="4" /></button>
            </div>
            <footer><span>Úpravy</span></footer>
          </section>
          <button class="fold" aria-label="Sbalit pás karet"><Ic n="up" :s="10" :t="8" /></button>
        </div>

        <div class="doc">
          <article class="page p1">
            <figure class="shot0">
              <div class="minibar">
                <span class="c"><Ic n="win" :s="10" /></span><span class="c"><Ic n="search" :s="10" /></span><span class="c"><Ic n="taskview" :s="11" /></span><span class="c lit"><Ic n="ie" :s="13" /></span><span class="c"><Ic n="explorer" :s="13" /></span><span class="c lit act"><Ic n="server" :s="14" /></span>
                <span class="trayx"><Ic n="network" :s="10" :t="9" /><Ic n="volx" :s="9" /><span class="clk">18:32<br />28.04.2020</span><Ic n="note" :s="12" /></span>
              </div>
            </figure>
          </article>
          <article class="page p2">
            <p>4) Ted v ADDS vytvoříme ty organizačné jednotky, v nich skupiny a uživatele.</p>
            <figure class="shot1">
              <div class="beam"></div>
              <div class="dlg"><span>Telefonické připojení</span><span>Prostředí</span><span>Relace</span></div>
              <div class="ad mini">
                <header><Ic n="book" :s="9" :t="10" /><span>Uživatelé a počítače služby Active Directory</span><div class="ctl"><Ic n="min" :s="8" /><Ic n="max" :s="8" /><Ic n="close" :s="8" /></div></header>
                <nav><a v-for="m in adMenu" :key="m" href="#">{{ m }}</a></nav>
                <div class="tools"><template v-for="(t, i) in adTools" :key="i"><i v-if="t === '|'" /><button v-else :class="{ hl: t[0] === '*' }" :aria-label="t"><Ic :n="t.replace('*', '')" :s="11" /></button></template></div>
                <div class="panes">
                  <div class="left">
                    <ul><li v-for="(r, i) in miniTree" :key="i" :style="{ paddingLeft: 3 + r[0] * 12 + 'px' }"><span v-if="r[1] !== '-'" class="ch"><Ic v-if="r[1]" :n="r[1] === 'd' ? 'down' : 'right'" :s="7" /></span><span class="lb" :class="{ sel: r[4] }"><Ic :n="r[2]" :s="9" :t="10" />{{ r[3] }}</span></li></ul>
                    <div class="hs"><Ic n="sl" :s="6" /><i /><Ic n="sr" :s="6" /></div>
                  </div>
                  <div class="rightp">
                    <table><thead><tr><th class="c1">Název</th><th class="c2">Typ</th><th class="c3">Popis</th><th /></tr></thead>
                      <tbody><tr v-for="g in miniGroups" :key="g"><td><span><Ic n="grp" :s="10" />{{ g }}</span></td><td>Skupina se zab...</td><td /><td /></tr></tbody></table>
                  </div>
                </div>
                <div class="stat"><i /><i /><i /></div>
              </div>
            </figure>
            <p class="q5">5) Na disku C vytvoříme to samé jako v ADDS a nasdílíme hlavní složku</p>
            <figure class="shot2">
              <div class="edge"><i /></div>
              <div class="vmw">
                <header><Ic n="win7" :s="9" :t="9" /><span>Hlabuček Win10 SERVER [Beží] - Oracle VM VirtualBox</span><div class="ctl"><Ic n="min" :s="8" /><Ic n="max" :s="8" /><Ic n="close" :s="8" /></div></header>
                <nav><a v-for="m in vmMenu" :key="m" href="#">{{ m }}</a></nav>
                <div class="inner">
                  <div class="ex exb">
                    <header class="l"><span>Místní disk (C:)</span><div class="ctl"><Ic n="min" :s="7" /><Ic n="max" :s="7" /><Ic n="close" :s="7" /></div></header>
                    <nav><a href="#">Sdílení</a><a href="#">Zobrazení</a><span class="q">?</span></nav>
                    <div class="addr"><div class="path">› Tento počítač › Místní disk (C:)</div><div class="srch"><span>Prohledat: Místní disk (C:)</span><Ic n="search" :s="7" /></div></div>
                    <div class="exc">
                      <div class="pins"><Ic n="pin" :s="6" /><span>ory <Ic n="pin" :s="6" /></span><Ic n="pin" :s="6" /><span class="cur"><Ic n="cursor" :s="7" :t="9" /></span></div>
                      <ul><li class="hd">Název</li><li v-for="(d, i) in disk" :key="d" :class="{ s: i === 0 }"><Ic n="yf" :s="6" :t="8" />{{ d }}</li></ul>
                    </div>
                  </div>
                  <div class="ex exf">
                    <header class="l"><Ic n="yf" :s="7" :t="8" /><i /><Ic n="refresh" :s="8" /><Ic n="yf" :s="7" :t="8" /><Ic n="tri" :s="4" :t="3" /><span>HOME</span><div class="ctl"><Ic n="min" :s="7" /><Ic n="max" :s="7" /><Ic n="close" :s="7" /></div></header>
                    <nav><a class="f" href="#">Soubor</a><a href="#">Domů</a><a href="#">Sdílení</a><a href="#">Zobrazení</a><span class="q">?</span></nav>
                    <div class="addr"><span class="arw">← → ˅ ↑</span><div class="path"><Ic n="yf" :s="6" :t="8" />› Tento počítač › Místní disk (C:) › HOME</div><div class="srch"><span>Prohledat: HOME</span><Ic n="search" :s="7" /></div></div>
                    <div class="exc">
                      <div class="quick"><span><Ic n="star" :s="7" />Rychlý přístup</span><span class="pl"><Ic n="cpanel" :s="8" />Plocha</span></div>
                      <table><thead><tr><th class="n">Název</th><th class="d">Datum změny</th><th class="ty">Typ</th><th>Velikost</th></tr></thead>
                        <tbody><tr class="s"><td><Ic n="yf" :s="6" :t="8" /> Admini</td><td>28.04.2020 18:34</td><td>Složka souborů</td><td /></tr><tr><td><Ic n="yf" :s="6" :t="8" /> Skupiny</td><td>28.04.2020 18:09</td><td>Složka souborů</td><td /></tr></tbody></table>
                    </div>
                  </div>
                </div>
              </div>
            </figure>
          </article>
        </div>

        <footer class="wstat">
          <span class="s1">Stránka 2 z 13</span><span class="s2">Počet slov: 250</span><Ic n="proof" :s="16" :t="14" /><Ic class="mac" n="macro" :s="14" />
          <div class="views"><button aria-label="Čtení"><Ic n="read" :s="16" :t="14" /></button><button class="on" aria-label="Tisk"><Ic n="print" :s="16" :t="14" /></button><button aria-label="Web"><Ic n="web" :s="16" :t="14" /></button></div>
          <div class="zoom"><b>−</b><input type="range" aria-label="Lupa" min="0" max="100" value="50" /><b>+</b></div><span class="pct">100 %</span>
        </footer>
      </main>

      <nav class="taskbar">
        <button class="app" aria-label="Start"><Ic n="win" :s="16" /></button>
        <button v-for="a in apps" :key="a[0]" class="app" :class="{ run: a[1] }" :aria-label="a[0]"><Ic :n="a[0]" :s="a[0] === 'taskview' || a[0] === 'gear' ? 18 : 23" /></button>
        <time class="clock edgec">10:20<br />06.05.2020</time>
      </nav>
    </section>

    <section class="monitor">
      <main class="vbapp">
        <header><Ic n="win7" :s="17" /><h2>Windows server macek Matouš [Beží] - Oracle VM VirtualBox</h2><div class="ctl"><Ic n="min" :s="12" /><Ic n="max" :s="12" /><Ic n="close" :s="12" /></div></header>
        <nav class="vmenu"><a v-for="m in vmMenu" :key="m" href="#">{{ m }}</a></nav>
        <div class="guest">
          <div class="screen">
            <div class="ad full">
              <header><Ic n="book" :s="14" :t="16" /><span>Uživatelé a počítače služby Active Directory</span><div class="ctl"><Ic n="min" :s="12" /><Ic n="restore" :s="12" /><Ic n="close" :s="12" /></div></header>
              <nav><a v-for="m in adMenu" :key="m" href="#">{{ m }}</a></nav>
              <div class="tools"><template v-for="(t, i) in adTools" :key="i"><i v-if="t === '|'" /><button v-else :class="{ hl: t[0] === '*' }" :aria-label="t"><Ic :n="t.replace('*', '')" :s="16" /></button></template></div>
              <div class="panes">
                <div class="left">
                  <ul><li v-for="(r, i) in bigTree" :key="i" :style="{ paddingLeft: 5 + r[0] * 19 + 'px' }"><span v-if="r[1] !== '-'" class="ch"><Ic v-if="r[1]" :n="r[1] === 'd' ? 'down' : 'right'" :s="12" /></span><span class="lb" :class="{ sel: r[4] }"><Ic :n="r[2]" :s="14" :t="r[2] === 'folder' || r[2] === 'ou' ? 14 : 16" />{{ r[3] }}</span></li></ul>
                  <div class="hs"><Ic n="sl" :s="8" /><i /><Ic n="sr" :s="8" /></div>
                </div>
                <div class="rightp">
                  <table><thead><tr><th class="c1">Název</th><th class="c2">Typ</th><th class="c3">Popis</th><th /></tr></thead>
                    <tbody><tr v-for="g in bigGroups" :key="g"><td><span><Ic n="grp" :s="16" />{{ g }}</span></td><td>Skupina se zab...</td><td /><td /></tr></tbody></table>
                </div>
              </div>
              <div class="stat"><i /><i /><i /></div>
            </div>
            <nav class="sbar">
              <button v-for="a in ['win', 'search', 'tview']" :key="a" :aria-label="a"><Ic :n="a" :s="a === 'tview' ? 20 : 16" :t="16" /></button>
              <button v-for="a in ['ie', 'explorer', 'server', 'adbook', 'gpo', 'xampp']" :key="a" class="a" :class="a" :aria-label="a"><Ic :n="a" :s="24" /></button>
              <div class="tray"><Ic n="up" :s="14" :t="11" /><Ic n="netwarn" :s="18" :t="16" /><Ic n="volx" :s="18" :t="16" /><time class="clock">21:54<br />30.04.2020</time><Ic class="nt" n="note" :s="18" /></div>
            </nav>
            <aside class="mark"><strong>Aktivujte Windows</strong><span>Přejděte do Nastavení a aktivujte<br />systém Windows.</span></aside>
            <Ic class="mouseptr" n="cursor" :s="12" :t="20" />
          </div>
        </div>
        <footer class="vstat"><Ic v-for="v in vmIcons" :key="v" :n="v" :s="16" /><span>Right Control</span></footer>
      </main>
      <nav class="taskbar">
        <button class="app" aria-label="Start"><Ic n="win" :s="16" /></button>
        <button v-for="a in apps" :key="a[0]" class="app" :class="{ run: a[1] }" :aria-label="a[0]"><Ic :n="a[0]" :s="a[0] === 'taskview' || a[0] === 'gear' ? 18 : 23" /></button>
        <div class="tray main"><Ic class="pp" n="ppl" :s="16" /><Ic n="up" :s="14" :t="11" /><Ic n="network" :s="18" :t="16" /><Ic n="vol" :s="18" :t="16" /><Ic n="eject" :s="18" :t="16" /><time class="clock">10:20<br />06.05.2020</time><Ic class="nt" n="note" :s="18" /></div>
      </nav>
    </section>
  </div>
</template>

<style>
body { margin: 0; }
</style>

<style scoped>
* { box-sizing: border-box; }
.defs { display: none; }
.ic { flex: none; display: block; }
button, input, select { font: inherit; color: inherit; background: none; border: 0; padding: 0; margin: 0; outline: 0; }
a { color: inherit; text-decoration: none; }
ul { list-style: none; margin: 0; padding: 0; }
figure, p, h1, h2 { margin: 0; font-weight: 400; }
.desktop { display: flex; height: 100vh; overflow: hidden; font-family: "Open Sans", "Noto Sans", sans-serif; font-size: 11px; line-height: 16px; color: #000; white-space: nowrap; }
.monitor { flex: 1 1 0; min-width: 0; display: flex; flex-direction: column; }

/* Word window */
.wordapp { flex: 1; min-height: 0; display: flex; flex-direction: column; background: #e6e6e6; color: #444; }
.wtitle { height: 33px; display: flex; align-items: center; background: #2b579a; color: #fff; }
.qat, .wctl { flex: 1; display: flex; align-items: center; }
.qat { padding: 0 0 2px 20px; }
.qat button { display: flex; align-items: center; gap: 7px; }
.qat .un { margin-left: 27px; }
.qat .dim { margin-left: 18px; color: #5f82b8; }
.qat .last { margin-left: 35px; }
.wtitle h1 { font-size: 11px; line-height: 16px; color: #aabedd; }
.wctl { justify-content: flex-end; gap: 34px; padding: 0 16px 3px 0; color: #8fa9d0; }
.wtabs { height: 24px; display: flex; align-items: center; background: #2b579a; color: #fff; }
.wtabs > button { height: 24px; padding: 0 15px; }
.wtabs .file { padding: 0 15px 0 10px; }
.wtabs .on { background: #f1f1f1; color: #2b579a; }
.tell { flex: 1; display: flex; align-items: center; gap: 6px; margin-left: 16px; color: #a9bfe0; }
.tell input { width: 220px; }
.tell input::placeholder { color: #a9bfe0; opacity: 1; }
.wtabs .login { padding: 0 10px; }
.wtabs .sharebtn { width: 74px; display: flex; align-items: center; gap: 4px; padding: 0 0 0 8px; background: #124078; }

.ribbon { height: 93px; display: flex; background: #f1f1f1; border-bottom: 1px solid #d2d2d2; }
.group { position: relative; display: flex; flex-direction: column; padding-top: 3px; margin-bottom: 4px; }
.group::after { content: ""; position: absolute; right: 0; top: 4px; bottom: 0; width: 1px; background: #d4d4d4; }
.group footer { display: flex; align-items: center; height: 14px; margin-top: auto; padding-right: 4px; color: #666; }
.group footer span { flex: 1; text-align: center; }
.clipb { width: 170px; }
.fontg { width: 263px; padding-left: 4px; }
.parg { width: 225px; padding-left: 4px; }
.styg { flex: 1; padding: 6px 8px 0 5px; }
.styg footer { padding: 0; }
.edg { width: 84px; padding-left: 9px; }
.cb { display: flex; }
.big { width: 50px; display: flex; flex-direction: column; align-items: center; padding-top: 5px; gap: 2px; }
.big span { padding-right: 2px; }
.stack button { display: flex; align-items: center; height: 23px; gap: 4px; }
.stack .off { color: #a0a0a0; }
.edg .stack button { gap: 4px; }
.mr { margin-left: 8px; }
.rep { width: 14px; display: flex; flex-direction: column; font-size: 9px; line-height: 8px; color: #4377b8; }
.row { display: flex; align-items: center; height: 23px; margin-top: 8px; color: #444; }
.t { width: 22px; height: 23px; display: flex; align-items: center; justify-content: center; font-size: 13px; }
.t sup, .t sub { font-size: 7px; line-height: 7px; color: #4377b8; }
.ar { width: 12px; display: flex; justify-content: center; color: #777; }
.sep { width: 8px; height: 22px; background: linear-gradient(90deg, transparent 4px, #d4d4d4 4px, #d4d4d4 5px, transparent 5px); }
.sm { font-size: 10px; }
.t.on { background: #c5c5c5; }
.fx { color: #fff; font-size: 16px; -webkit-text-stroke: 1px #4377b8; }
.bar { position: relative; border-bottom: 4px solid #ff0; height: 17px; width: 16px; margin: 0 3px; }
.bar.y { font-size: 10px; justify-content: flex-start; }
.pen { position: absolute; right: 0; top: 1px; }
.bar.r { border-color: #f00; }
.pil { font-size: 15px; }
.combo { position: relative; display: flex; align-items: center; height: 23px; background: #fff; border: 1px solid #c6c6c6; }
.combo select { flex: 1; width: 0; appearance: none; padding-left: 2px; font-size: 11px; color: #333; overflow: hidden; }
.combo .ic { margin: 0 4px 0 2px; color: #777; }
.combo.name { width: 94px; }
.combo.size { width: 44px; margin: 0 2px 0 -1px; }

.gallery { display: flex; height: 61px; background: #fff; border: 1px solid #ababab; }
.cell { flex: 1 1 0; min-width: 0; display: flex; flex-direction: column; align-items: center; justify-content: space-between; padding: 5px 4px 5px; color: #444; }
.cell.sel { box-shadow: inset 0 0 0 4px #c5c5c5; }
.sample { width: 59px; height: 30px; line-height: 34px; overflow: hidden; text-align: left; font-family: Lato, sans-serif; font-size: 14px; color: #000; }
.nm { font-size: 11px; }
.h1 { font-size: 17px; color: #2f5496; font-weight: 300; }
.h2 { font-size: 15px; color: #2f5496; font-weight: 300; }
.title { font-size: 33px; line-height: 26px; font-weight: 300; }
.sub { color: #5a5a5a; }
.em { font-style: italic; }
.grey { color: #404040; }
.blue { color: #4472c4; }
.strong { font-weight: 700; }
.caps { font-variant: small-caps; }
.lined { background: linear-gradient(#4472c4, #4472c4) 0 6px / 100% 1px no-repeat, linear-gradient(#4472c4, #4472c4) 0 25px / 100% 1px no-repeat; }
.gscroll { width: 15px; display: flex; flex-direction: column; }
.gscroll button { flex: 1; display: flex; align-items: center; justify-content: center; border-left: 1px solid #ababab; border-bottom: 1px solid #ababab; color: #666; }
.gscroll button:last-child { border-bottom: 0; }
.gscroll .offb { background: #e5e5e5; color: #aaa; }
.fold { width: 69px; align-self: flex-end; display: flex; justify-content: flex-end; padding: 0 10px 5px 0; }

.doc { flex: 1; min-height: 0; overflow: hidden; padding-right: 16px; }
.page { width: 792px; margin: 0 auto; background: #fff; border: 1px solid #c6c6c6; color: #000; font-family: Lato, sans-serif; font-size: 14px; line-height: 20px; }
.p1 { border-top: 0; padding: 0 0 109px 62px; }
.p2 { margin-top: 14px; padding: 93px 0 93px 92px; }
.page figure { font-family: "Open Sans", sans-serif; }
.shot0 { width: 635px; height: 52px; padding: 1px 63px 0 62px; background: #f0f0f0; border-left: 6px solid #d4d4d4; border-right: 1px solid #e08a92; box-shadow: inset 1px 0 #e08a92; }
.minibar { height: 20px; display: flex; background: #05080d; color: #fff; }
.minibar .c { width: 24px; display: flex; align-items: center; justify-content: center; }
.minibar .lit { background: #22272c; }
.minibar .act { background: #3b4148; border-bottom: 1px solid #76b9ed; }
.trayx { margin-left: auto; display: flex; align-items: center; gap: 3px; padding-right: 8px; }
.clk { width: 34px; font-size: 6px; line-height: 9px; text-align: center; }
.trayx .clk { margin-right: 6px; }

.shot1 { position: relative; width: 489px; height: 354px; margin-top: 10px; padding: 11px 10px 14px 11px; overflow: hidden; background: linear-gradient(90deg, #00102a, #041f48 30%, #00132f 80%, #031c3c); }
.beam { position: absolute; right: 0; top: 97px; width: 11px; height: 176px; background: linear-gradient(#0a4e9a, #1480dc 30%, #3aa6ee 45%, #06244c 51%, #06244c 53%, #2a9df0 54%, #0a8ff0 80%, #062b5a); }
.dlg { position: absolute; left: 198px; top: 0; width: 255px; height: 11px; display: flex; background: #f0f0f0; font-size: 7px; line-height: 8px; color: #333; }
.dlg span { flex: 2; text-align: center; border-right: 1px solid #d0d0d0; }
.dlg span:nth-child(n+2) { flex: 1; }

/* Directory console, shared by both sizes */
.ad { display: flex; flex-direction: column; background: #f0f0f0; color: #000; }
.ad > header, .ad > nav, .tools { display: flex; align-items: center; background: #fff; }
.ctl { display: flex; margin-left: auto; align-items: center; }
.tools { border-top: 1px solid #a9abb5; border-bottom: 1px solid #d9d9d9; }
.tools i { background: #8d8d8d; }
.tools button { display: flex; align-items: center; justify-content: center; }
.tools .hl { background: #cce8ff; box-shadow: inset 0 0 0 1px #99d1ff; }
.panes { flex: 1; min-height: 0; display: flex; }
.left, .rightp { background: #fff; border: 1px solid #828790; overflow: hidden; display: flex; flex-direction: column; }
.rightp { flex: 1; }
.ad li { display: flex; align-items: center; overflow: hidden; }
.lb { display: flex; align-items: center; }
.lb.sel { background: #d9d9d9; }
.hs { margin-top: auto; display: flex; align-items: center; justify-content: space-between; background: #f0f0f0; }
.hs i { align-self: stretch; background: #cdcdcd; }
.hs .ic:last-child { margin-left: auto; }
.ad table { width: 100%; table-layout: fixed; border-collapse: collapse; }
.ad th, .ad td { padding: 0; text-align: left; font-weight: 400; }
.ad th { background: linear-gradient(#e5e5e5, #e5e5e5) right top / 1px 100% no-repeat; }
.ad th:last-child { background: none; }
.ad td span { display: flex; align-items: center; }
.stat { display: flex; justify-content: flex-end; }
.stat i { border-left: 1px solid #d7d7d7; }

.full { height: 728px; font-size: 11px; }
.full > header { height: 24px; padding: 0 19px 0 3px; gap: 6px; }
.full .ctl { gap: 34px; padding-bottom: 3px; }
.full > nav { height: 21px; padding-left: 10px; gap: 17px; }
.full .tools { height: 24px; padding-left: 2px; }
.full .tools button { width: 23px; height: 21px; }
.full .tools i { width: 1px; height: 18px; margin: 0 4px 0 3px; }
.full .panes { gap: 3px; margin-top: 6px; }
.full .left { width: 224px; padding: 1px; }
.full li { height: 18px; padding-right: 0; }
.full .ch { width: 12px; margin-right: 6px; }
.full .lb { height: 18px; gap: 7px; }
.full .lb.sel { padding: 0 4px 0 2px; margin-left: -2px; }
.full .hs { height: 16px; padding: 0 5px; }
.full .hs i { width: 104px; margin-left: 4px; }
.full th { height: 26px; padding-left: 7px; }
.full td { height: 19px; padding-left: 7px; }
.full td:first-child { padding-left: 5px; }
.full td span { gap: 2px; }
.full .c1 { width: 101px; }
.full .c2 { width: 100px; }
.full .c3 { width: 150px; }
.full .stat { height: 23px; padding: 2px 0 1px; }
.full .stat i { width: 133px; }
.full .stat i:nth-child(2) { width: 86px; }
.full .stat i:last-child { width: 2px; }

.mini { height: 329px; font-size: 7px; line-height: 10px; color: #111; }
.mini > header { height: 18px; padding: 0 10px 0 5px; gap: 4px; }
.mini .ctl { gap: 20px; }
.mini > nav { height: 15px; padding-left: 6px; gap: 10px; }
.mini .tools { height: 15px; padding-left: 1px; }
.mini .tools button { width: 15px; height: 13px; }
.mini .tools i { width: 1px; height: 11px; margin: 0 1px; }
.mini .panes { gap: 2px; margin-top: 3px; }
.mini .left { width: 122px; padding: 1px 0; }
.mini ul { display: grid; grid-auto-rows: 1fr; height: 202px; }
.mini .ch { width: 7px; margin-right: 4px; }
.mini .lb { gap: 4px; }
.mini .hs { height: 10px; padding: 0 4px; }
.mini .hs i { width: 42px; margin-left: 2px; }
.mini th { height: 16px; padding-left: 4px; }
.mini td { height: 12px; padding-left: 4px; }
.mini td:first-child { padding-left: 3px; }
.mini td span { gap: 2px; }
.mini .c1 { width: 118px; }
.mini .c2 { width: 62px; }
.mini .c3 { width: 93px; }
.mini .stat { height: 15px; }
.mini .stat i { width: 82px; }
.mini .stat i:last-child { width: 54px; }
.mini .stat i:first-child { width: 0; }

.page .q5 { margin-top: 12px; }
.shot2 { display: flex; width: 604px; height: 260px; overflow: hidden; font-size: 6px; line-height: 9px; }
.edge { width: 4px; border-right: 1px solid #e81123; background: #f0f0f0; padding-top: 50px; }
.edge i { display: block; height: 30px; background: #2b579a; }
.vmw { flex: 1; display: flex; flex-direction: column; background: #f0f0f0; }
.vmw > header { height: 14px; display: flex; align-items: center; gap: 2px; padding: 0 5px 0 4px; background: #e81123; color: #fff; }
.vmw > header .ctl { gap: 13px; }
.vmw > nav { height: 11px; display: flex; align-items: center; gap: 7px; padding-left: 3px; background: #fff; }
.inner { position: relative; flex: 1; margin: 45px 59px 0 60px; overflow: hidden; border-top: 1px solid #bbb; background: linear-gradient(#021530, #06285a); }
.ex { position: absolute; background: #fff; color: #333; }
.exb { left: 0; top: 0; width: 313px; height: 160px; }
.exf { left: 96px; top: 37px; width: 369px; height: 120px; border: 1px solid #999; }
.ex header { display: flex; align-items: center; gap: 4px; height: 14px; padding-right: 7px; color: #999; }
.exf header { padding-left: 5px; }
.ex header i { width: 1px; height: 7px; background: #bbb; }
.ex .ctl { gap: 14px; }
.ex nav { display: flex; align-items: center; gap: 13px; height: 11px; padding-left: 6px; }
.exf nav { padding-left: 0; }
.ex .f { background: #0063b1; color: #fff; padding: 1px 4px; margin-right: -6px; }
.q { margin-left: auto; margin-right: 2px; width: 7px; height: 7px; line-height: 7px; border-radius: 50%; background: #0078d7; color: #fff; text-align: center; }
.addr { display: flex; align-items: center; gap: 4px; padding: 3px 5px 0 1px; }
.path, .srch { display: flex; align-items: center; gap: 4px; height: 11px; padding: 0 3px; border: 1px solid #ddd; }
.path { flex: 1; }
.srch { width: 96px; justify-content: space-between; color: #888; }
.arw { width: 44px; text-align: center; font-size: 8px; }
.exc { display: flex; }
.pins { width: 18px; padding-top: 22px; display: grid; grid-auto-rows: 11px; justify-items: end; }
.pins span { display: flex; }
.pins .cur { background: #cce8ff; width: 18px; justify-content: center; }
.exb ul { margin-left: 8px; width: 80px; }
.exb li { height: 10px; display: flex; align-items: center; gap: 3px; padding-left: 3px; }
.exb .hd { height: 19px; color: #4a5f86; padding-top: 4px; }
.exb .s { background: #d9d9d9; }
.quick { width: 82px; padding: 16px 0 0 12px; display: grid; grid-auto-rows: 11px; }
.quick span { display: flex; align-items: center; gap: 3px; }
.quick .pl { padding-left: 3px; }
.exf table { width: 271px; table-layout: fixed; border-collapse: collapse; margin-top: 1px; }
.exf th, .exf td { height: 12px; padding: 0; text-align: left; font-weight: 400; color: #777; }
.exf th { height: 18px; color: #5a6f96; }
.exf td:first-child { color: #222; padding-left: 3px; }
.exf td .ic { display: inline-block; vertical-align: middle; }
.exf .s { background: #d9d9d9; }
.exf .n { width: 123px; }
.exf .d { width: 57px; }
.exf .ty { width: 56px; }

.wstat { height: 22px; display: flex; align-items: center; padding: 0 7px 0 7px; background: #f1f1f1; border-top: 1px solid #c6c6c6; }
.s1 { width: 90px; }
.s2 { width: 95px; }
.mac { margin-left: 19px; }
.views { margin-left: auto; display: flex; align-self: stretch; }
.views button { width: 38px; display: flex; align-items: center; justify-content: center; }
.views .on { background: #c8c8c8; }
.zoom { display: flex; align-items: center; gap: 2px; margin-left: 4px; font-size: 15px; color: #666; }
.zoom b { width: 9px; text-align: center; }
.zoom input { width: 104px; height: 16px; appearance: none; background: linear-gradient(#999, #999) center / 100% 1px no-repeat; }
.zoom input::-webkit-slider-thumb { appearance: none; width: 4px; height: 12px; background: #666; }
.pct { margin-left: 13px; width: 32px; }

/* Host taskbar */
.taskbar { height: 40px; flex: none; display: flex; background: linear-gradient(90deg, #1c1f22, #221f20 55%, #2e232d); color: #fff; }
.app { width: 49px; display: flex; align-items: center; justify-content: center; }
.app.run { background: linear-gradient(#76b9ed, #76b9ed) center bottom / 40px 2px no-repeat; }
.clock { width: 62px; font-size: 11px; line-height: 19px; text-align: center; align-self: center; }
.edgec { margin-left: auto; margin-right: 2px; }
.tray { margin-left: auto; display: flex; align-items: center; gap: 6px; color: #fff; }
.tray.main { padding-right: 4px; border-right: 1px solid #777; margin-right: 4px; }
.pp { margin-right: 15px; }
.nt { margin: 0 14px 0 7px; }

/* VirtualBox window */
.vbapp { flex: 1; min-height: 0; display: flex; flex-direction: column; background: #f0f0f0; color: #999; }
.vbapp > header { height: 24px; display: flex; align-items: center; gap: 7px; padding: 0 19px 0 2px; background: #fff; }
.vbapp h2 { font-size: 11px; line-height: 16px; }
.vbapp > header .ctl { gap: 34px; padding-bottom: 3px; }
.vmenu { height: 19px; display: flex; align-items: center; gap: 17px; padding: 0 0 0 8px; background: #fff; }
.guest { flex: 1; display: flex; align-items: center; justify-content: center; padding-top: 3px; }
.screen { position: relative; width: 1024px; }
.mouseptr { position: absolute; left: 435px; top: 611px; }
.mark { position: absolute; right: 45px; bottom: 71px; display: flex; flex-direction: column; font-size: 14px; line-height: 20px; color: #c0c0c0; }
.mark strong { font-size: 19px; line-height: 26px; font-weight: 400; }
.sbar { height: 40px; display: flex; background: #020306; color: #fff; }
.sbar button { width: 48px; display: flex; align-items: center; justify-content: center; }
.sbar .a { width: 49px; }
.sbar .adbook { background: #333438; border-bottom: 2px solid #76b9ed; }
.sbar .xampp { background: linear-gradient(#76b9ed, #76b9ed) center bottom / 40px 2px no-repeat; }
.sbar .tray { border-right: 1px solid #777; margin-right: 3px; }
.sbar .nt { margin-right: 20px; }
.vstat { height: 22px; display: flex; align-items: center; justify-content: flex-end; gap: 3px; padding-right: 2px; color: #000; font-size: 10px; }
</style>
